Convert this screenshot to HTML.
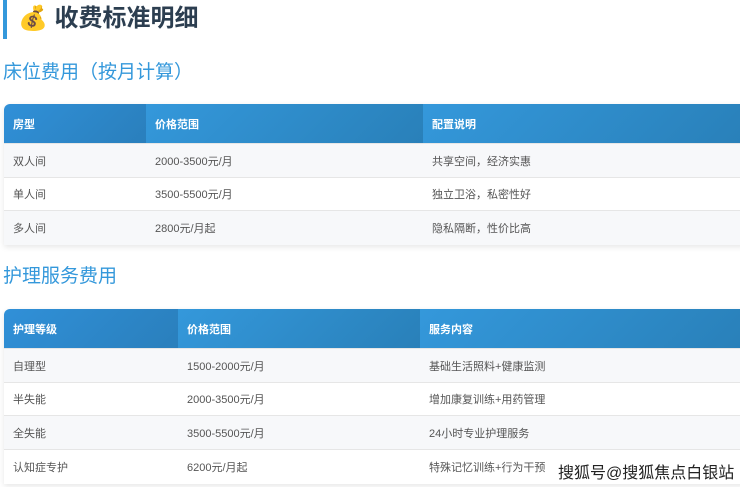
<!DOCTYPE html><html><head><meta charset="utf-8"><style>
body{margin:0;width:740px;height:487px;overflow:hidden;background:#fff;font-family:"Liberation Sans","Noto Sans CJK SC",sans-serif;position:relative}
.bar{position:absolute;left:3px;top:0;width:4px;height:39px;background:#3498db}
.t{position:absolute;left:18px;top:4px;font-size:24px;font-weight:bold;color:#2c3e50;line-height:30px}
.h{position:absolute;left:3px;font-size:19px;color:#3498db;line-height:26px}
table{position:absolute;left:4px;width:740px;border-collapse:collapse;font-size:11px;color:#555;box-shadow:0 2px 6px rgba(0,0,0,.1);border-radius:6px 0 0 0;overflow:hidden}
th{background:linear-gradient(135deg,#3498db,#2980b9);color:#fff;text-align:left;font-weight:bold;height:39px;padding:0 0 0 9px}
th:first-child{background:linear-gradient(135deg,#3090d8,#2a7fbc)}
td{padding:0 0 0 9px;border-top:1px solid #e6e6e6;background:#fff}
tr:nth-child(even) td{background:#f7f8fa}
</style></head><body>
<div class="bar"></div>
<div class="t"><span style="font-size:24px">💰</span> 收费标准明细</div>
<div class="h" style="top:60px">床位费用（按月计算）</div>
<table style="top:104px"><tr><th style="width:133px">房型</th><th style="width:268px">价格范围</th><th>配置说明</th></tr>
<tr style="height:34px"><td>双人间</td><td>2000-3500元/月</td><td>共享空间，经济实惠</td></tr>
<tr style="height:33px"><td>单人间</td><td>3500-5500元/月</td><td>独立卫浴，私密性好</td></tr>
<tr style="height:34px"><td>多人间</td><td>2800元/月起</td><td>隐私隔断，性价比高</td></tr></table>
<div class="h" style="top:264px">护理服务费用</div>
<table style="top:309px"><tr><th style="width:165px">护理等级</th><th style="width:233px">价格范围</th><th>服务内容</th></tr>
<tr style="height:34px"><td>自理型</td><td>1500-2000元/月</td><td>基础生活照料+健康监测</td></tr>
<tr style="height:33px"><td>半失能</td><td>2000-3500元/月</td><td>增加康复训练+用药管理</td></tr>
<tr style="height:34px"><td>全失能</td><td>3500-5500元/月</td><td>24小时专业护理服务</td></tr>
<tr style="height:34px"><td>认知症专护</td><td>6200元/月起</td><td>特殊记忆训练+行为干预</td></tr></table>
<div style="position:absolute;left:558px;top:459px;font-size:16px;color:#222;text-shadow:0 0 2px #fff,0 0 2px #fff">搜狐号@搜狐焦点白银站</div>
</body></html>
